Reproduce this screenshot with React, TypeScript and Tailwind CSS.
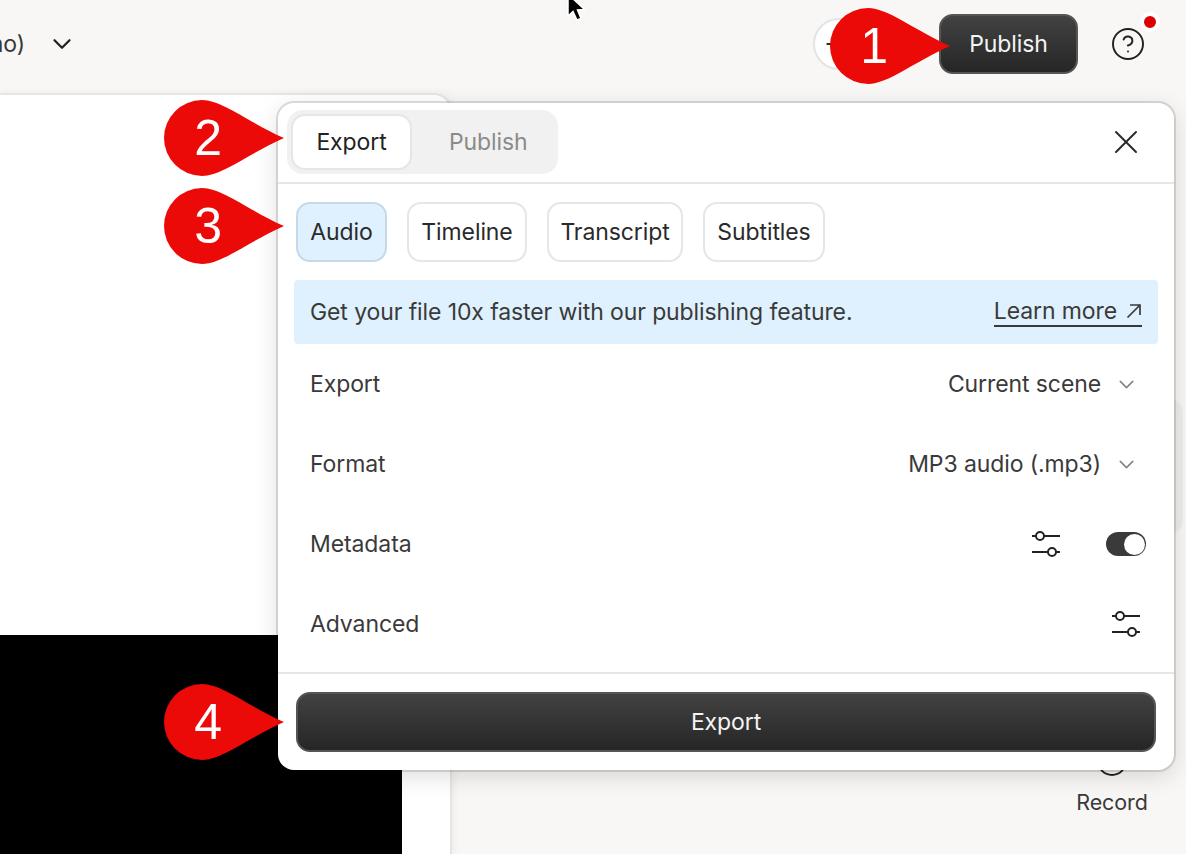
import { ChevronDown, CircleHelp, Plus, X } from 'lucide-react';

function Pin({ n, className }: { n: number; className: string }) {
    return (
        <div className={`absolute z-20 flex h-[76px] w-[120px] items-center ${className}`}>
            <svg width="120" height="76" viewBox="0 0 120 76" className="absolute inset-0">
                <path d="M38 0 C58 0 84 22 120 38 C84 54 58 76 38 76 A38 38 0 0 1 38 0 Z" fill="#ec0a08" />
            </svg>
            <span className="relative w-[88px] text-center text-[50px] leading-none text-white font-['Liberation_Sans',sans-serif]">{n}</span>
        </div>
    );
}

function Sliders() {
    return (
        <svg width="28" height="26" viewBox="0 0 28 26" fill="none" stroke="#222" strokeWidth="2">
            <path d="M0 5H28M0 21H28" />
            <circle cx="8" cy="5" r="4" fill="#fff" />
            <circle cx="20" cy="21" r="4" fill="#fff" />
        </svg>
    );
}

function Row({ label, children }: { label: string; children: React.ReactNode }) {
    return (
        <div className="flex h-20 items-center justify-between pl-[32px] pr-[28px] text-[#3a3a3a]">
            <span>{label}</span>
            <div className="flex items-center">{children}</div>
        </div>
    );
}

function Chevron() {
    return (
        <span className="ml-[5px] flex w-10 justify-center text-[#808080]">
            <ChevronDown size={25} strokeWidth={1.4} />
        </span>
    );
}

const darkButton = 'flex h-[60px] items-center justify-center rounded-[14px] border-2 border-[#555] bg-gradient-to-b from-[#424242] to-[#262626] text-[#f4f4f4]';

export default function App() {
    return (
        <div className="relative flex h-[854px] w-[1186px] flex-col overflow-hidden bg-[#f8f7f6] font-['Inter',sans-serif] text-[23px] tracking-[-0.1px] text-[#2a2a2a]">
            {/* top bar */}
            <header className="flex h-[93px] shrink-0 items-start pt-[14px]">
                <div className="flex h-[60px] w-[25px] shrink-0 items-center justify-end">
                    <span className="shrink-0 text-[#3a3a3a]">(demo)</span>
                </div>
                <ChevronDown size={30} strokeWidth={1.8} className="ml-[22px] mt-[15px] text-[#222]" />
                <div className="ml-auto flex items-center">
                    <div className="flex h-[52px] w-[52px] items-center justify-center rounded-full border-2 border-[#e4e4e4] bg-white">
                        <Plus size={40} strokeWidth={1.2} className="shrink-0" />
                    </div>
                    <button className={`${darkButton} ml-[74px] w-[139px]`}>Publish</button>
                    <div className="relative ml-[32px] mr-[40px] h-9 w-9 text-[#222]">
                        <CircleHelp size={36} strokeWidth={1.3} />
                        <span className="absolute -right-[14px] -top-[14px] h-5 w-5 rounded-full border-[4px] border-white bg-[#dd0000]" />
                    </div>
                </div>
            </header>

            {/* workspace */}
            <div className="flex min-h-0 flex-1">
                <div className="flex w-[452px] shrink-0 flex-col justify-end rounded-tr-[18px] border-r-2 border-t-2 border-[#e7e5e3] bg-white shadow-[2px_0_8px_rgba(0,0,0,0.05)]">
                    <div className="h-[219px] w-[402px] bg-black" />
                </div>
                <div className="ml-auto flex w-[148px] flex-col items-center pb-[38px]">
                    <div className="ml-auto mr-[3px] mt-[306px] h-[135px] w-[60px] rounded-[14px] bg-[#efeeec]" />
                    <div className="mt-auto h-[30px] w-[30px] rounded-full border-2 border-[#222]" />
                    <span className="mt-[12px] text-[21.5px] leading-7 text-[#3a3a3a]">Record</span>
                </div>
            </div>

            {/* export popover */}
            <div className="absolute left-[278px] top-[103px] z-10 flex h-[667px] w-[896px] flex-col rounded-[16px] bg-white shadow-[0_0_0_2px_rgba(0,0,0,0.12),0_6px_24px_rgba(0,0,0,0.14)]">
                <div className="flex h-[81px] shrink-0 items-center justify-between border-b-2 border-[#e6e6e6] pb-px pl-[9px] pr-[28px]">
                    <div className="flex h-16 w-[271px] items-center rounded-2xl bg-[#f1f1f1] pl-1">
                        <div className="flex h-14 w-[121px] items-center justify-center rounded-[14px] border-2 border-[#e6e6e6] bg-white text-[#222]">Export</div>
                        <span className="ml-[37px] text-[#8a8a8a]">Publish</span>
                    </div>
                    <X size={40} strokeWidth={1.2} className="text-[#2a2a2a]" />
                </div>

                <div className="flex gap-5 pl-[18px] pt-[18px]">
                    <div className="flex h-[60px] w-[91px] items-center justify-center rounded-[14px] border-2 border-[#c6d9ea] bg-[#dff1fe]">Audio</div>
                    <div className="flex h-[60px] w-[120px] items-center justify-center rounded-[14px] border-2 border-[#e6e6e6]">Timeline</div>
                    <div className="flex h-[60px] w-[136px] items-center justify-center rounded-[14px] border-2 border-[#e6e6e6]">Transcript</div>
                    <div className="flex h-[60px] w-[122px] items-center justify-center rounded-[14px] border-2 border-[#e6e6e6]">Subtitles</div>
                </div>

                <div className="mx-4 mt-[18px] flex h-16 items-center justify-between rounded-[4px] bg-[#dff1fe] px-4 text-[#3a3a3a]">
                    <span>Get your file 10x faster with our publishing feature.</span>
                    <span className="flex items-center border-b-2 border-[#3a3a3a] leading-[28px]">
                        Learn more
                        <svg width="16" height="16" viewBox="0 0 16 16" fill="none" stroke="#3a3a3a" strokeWidth="1.7" className="ml-[9px]">
                            <path d="M1.5 14.5L14 2M4 2H14V12" />
                        </svg>
                    </span>
                </div>

                <Row label="Export">
                    <span>Current scene</span>
                    <Chevron />
                </Row>
                <Row label="Format">
                    <span>MP3 audio (.mp3)</span>
                    <Chevron />
                </Row>
                <Row label="Metadata">
                    <span className="flex w-10 justify-center"><Sliders /></span>
                    <span className="ml-10 flex h-6 w-10 items-center justify-end rounded-full bg-[#3a3a3a] pr-[1px]">
                        <span className="h-[21px] w-[21px] rounded-full bg-white" />
                    </span>
                </Row>
                <Row label="Advanced">
                    <span className="flex w-10 justify-center"><Sliders /></span>
                </Row>

                <div className="mt-2 flex-1 border-t-2 border-[#e6e6e6] px-[18px] pt-[18px]">
                    <button className={`${darkButton} w-full`}>Export</button>
                </div>
            </div>

            {/* callouts */}
            <Pin n={1} className="left-[830px] top-[8px]" />
            <Pin n={2} className="left-[164px] top-[100px]" />
            <Pin n={3} className="left-[164px] top-[188px]" />
            <Pin n={4} className="left-[164px] top-[684px]" />

            {/* mouse pointer */}
            <svg width="30" height="35" viewBox="0 0 30 35" className="absolute left-[560px] -top-[10px] z-30">
                <path d="M8 4L8 26L13 21.5L17 30L21 28.5L17.5 20L24.5 19.5Z" fill="#000" stroke="#fff" strokeWidth="1.5" />
            </svg>
        </div>
    );
}
